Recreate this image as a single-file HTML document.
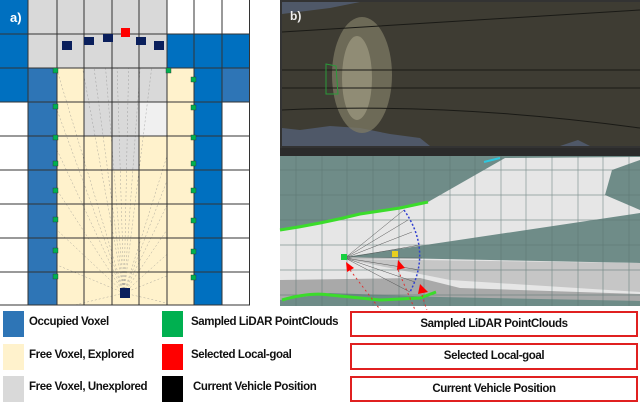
<!DOCTYPE html>
<html><head><meta charset="utf-8"><style>
body{margin:0;width:640px;height:403px;background:#fff;position:relative;overflow:hidden;font-family:"Liberation Sans",Arial,sans-serif}
.lg{position:absolute;font-size:11.5px;font-weight:bold;color:#111;letter-spacing:-0.4px;white-space:nowrap}
.sq{position:absolute;width:21px;height:26px}
.bx{position:absolute;left:350px;width:284px;border:2px solid #e02020;font-size:11.5px;font-weight:bold;text-align:center;color:#111;letter-spacing:-0.4px}
</style></head><body>
<svg width="640" height="310" style="position:absolute;left:0;top:0">
<defs><clipPath id="c1"><rect x="57" y="68" width="110" height="237"/></clipPath></defs>
<g>
<rect x="0" y="0" width="28" height="102" fill="#0070c0"/>
<rect x="28" y="0" width="139" height="68" fill="#d9d9d9"/>
<rect x="167" y="0" width="83" height="34" fill="#fff"/>
<rect x="167" y="34" width="83" height="34" fill="#0070c0"/>
<rect x="28" y="68" width="29" height="237" fill="#2e75b6"/>
<rect x="57" y="68" width="137" height="237" fill="#fff2cc"/>
<rect x="84" y="68" width="83" height="68" fill="#d9d9d9"/>
<rect x="139" y="102" width="28" height="34" fill="#f0f0f0"/>
<rect x="112" y="136" width="27" height="34" fill="#d9d9d9"/>
<rect x="194" y="68" width="28" height="237" fill="#0070c0"/>
<rect x="222" y="68" width="28" height="34" fill="#2e75b6"/>
</g>
<g stroke="#888" stroke-width="0.5" stroke-dasharray="2,2" opacity="0.7" clip-path="url(#c1)">
<line x1="124" y1="293" x2="57" y2="70"/><line x1="124" y1="293" x2="57" y2="110"/><line x1="124" y1="293" x2="57" y2="150"/><line x1="124" y1="293" x2="57" y2="190"/><line x1="124" y1="293" x2="57" y2="230"/><line x1="124" y1="293" x2="57" y2="265"/>
<line x1="124" y1="293" x2="70" y2="0"/><line x1="124" y1="293" x2="85" y2="0"/><line x1="124" y1="293" x2="100" y2="0"/><line x1="124" y1="293" x2="115" y2="0"/><line x1="124" y1="293" x2="130" y2="0"/><line x1="124" y1="293" x2="145" y2="0"/><line x1="124" y1="293" x2="160" y2="0"/>
<line x1="124" y1="293" x2="194" y2="70"/><line x1="124" y1="293" x2="194" y2="110"/><line x1="124" y1="293" x2="194" y2="150"/><line x1="124" y1="293" x2="194" y2="190"/><line x1="124" y1="293" x2="194" y2="230"/><line x1="124" y1="293" x2="194" y2="265"/>
<line x1="124" y1="293" x2="75" y2="305"/><line x1="124" y1="293" x2="175" y2="305"/>
</g>
<g stroke="#333" stroke-width="1" fill="none">
<path d="M0 34H250M0 68H250M0 102H250M0 136H250M0 170H250M0 204H250M0 238H250M0 272H250M0 305H250"/>
<path d="M28 0V305M57 0V305M84 0V305M112 0V305M139 0V305M167 0V305M194 0V305M222 0V305M249.5 0V305"/>
</g>
<text x="10" y="22" font-size="13" font-weight="bold" fill="#fff" font-family="Liberation Sans,sans-serif">a)</text>
<g fill="#00b050" stroke="#333" stroke-width="0.4">
<rect x="53" y="68" width="5" height="5"/><rect x="53" y="104" width="5" height="5"/><rect x="53" y="135" width="5" height="5"/><rect x="53" y="161" width="5" height="5"/><rect x="53" y="188" width="5" height="5"/><rect x="53" y="217" width="5" height="5"/><rect x="53" y="248" width="5" height="5"/><rect x="53" y="274" width="5" height="5"/>
<rect x="166" y="68" width="5" height="5"/><rect x="191" y="77" width="5" height="5"/><rect x="191" y="105" width="5" height="5"/><rect x="191" y="135" width="5" height="5"/><rect x="191" y="161" width="5" height="5"/><rect x="191" y="188" width="5" height="5"/><rect x="191" y="218" width="5" height="5"/><rect x="191" y="249" width="5" height="5"/><rect x="191" y="275" width="5" height="5"/>
</g>
<g fill="#0a1f5c">
<rect x="62" y="41" width="10" height="9"/><rect x="84" y="37" width="10" height="8"/><rect x="103" y="34" width="10" height="8"/><rect x="136" y="37" width="10" height="8"/><rect x="154" y="41" width="10" height="9"/>
<rect x="120" y="288" width="10" height="10"/>
</g>
<rect x="121" y="28" width="9" height="9" fill="#f00"/>
<!-- b top panel -->
<rect x="280" y="0" width="360" height="148" fill="#333"/>
<rect x="282" y="2" width="358" height="144" fill="#4f5868"/>
<path d="M282 14 L330 8 L360 2 L640 2 V146 H590 L578 140 L560 146 H430 L420 138 L390 134 L360 128 L330 126 L300 130 L282 128Z" fill="#3e3c33"/>
<ellipse cx="362" cy="75" rx="30" ry="58" fill="#7e7a64" opacity="0.75"/>
<ellipse cx="357" cy="78" rx="15" ry="42" fill="#a8a388" opacity="0.6"/>
<path d="M282 32 Q450 22 640 10M282 110 Q450 102 640 128M282 70 H640M282 88 H640" stroke="#1a1a16" stroke-width="1" fill="none"/>
<path d="M326 64 L336 66 L338 94 L326 94Z" stroke="#2a9a3a" fill="none" stroke-width="1"/>
<text x="290" y="20" font-size="12" font-weight="bold" fill="#eee" font-family="Liberation Sans,sans-serif">b)</text>
<rect x="280" y="148" width="360" height="8" fill="#2b2b2b"/>
<!-- bottom panel -->
<rect x="280" y="156" width="360" height="150" fill="#6f8c88"/>
<path d="M280 230 L330 222 L380 210 L428 202 L505 158 L640 157 L640 160 L612 170 L605 195 L640 210 L640 306 L280 306Z" fill="#e6e6e6"/>
<path d="M345 257 L640 213 L640 263 Z" fill="#6f8c88"/>
<path d="M345 259 L640 263 L640 292 L450 280 Z" fill="#c6c6c6"/>
<path d="M280 280 L420 278 L460 288 L640 294 L640 306 L280 306Z" fill="#a9a9a9"/>
<path d="M280 300 L330 293 L440 297 L640 301 L640 306 L280 306Z" fill="#6f8c88"/>
<g stroke="#5b7572" stroke-width="0.7" opacity="0.7">
<path d="M296 156V306M322 156V306M347 156V306M373 156V306M399 156V306M424 156V306M450 156V306M475 156V306M501 156V306M526 156V306M552 156V306M578 156V306M603 156V306M629 156V306"/>
<path d="M280 170H640M280 195H640M280 220H640M280 245H640M280 270H640M280 295H640"/>
</g>
<path d="M280 230 Q320 224 360 214 L400 208 L428 202" stroke="#3bdc2b" stroke-width="3" fill="none"/>
<path d="M282 300 Q310 292 330 295 L380 300 L420 298 L436 292" stroke="#3bdc2b" stroke-width="3" fill="none"/>
<path d="M484 162 L500 158" stroke="#2ec8e0" stroke-width="2"/>
<g stroke="#555" stroke-width="0.5">
<path d="M345 258L404 210M345 258L408 220M345 258L412 232M345 258L420 245M345 258L422 258M345 258L420 270M345 258L415 282M345 258L410 292"/>
</g>
<path d="M404 210 Q432 250 410 292" stroke="#3040d0" stroke-width="1.5" stroke-dasharray="2,2" fill="none"/>
<rect x="341" y="254" width="6" height="6" fill="#16d040"/>
<rect x="392" y="251" width="6" height="6" fill="#e8d020"/>
<g fill="#f00"><path d="M346 262 L354 268 L347 272Z"/><path d="M398 260 L405 268 L397 270Z"/><path d="M420 284 L428 292 L418 294Z"/></g>
<g stroke="#e03030" stroke-width="1" stroke-dasharray="2,3" fill="none">
<path d="M350 270 L430 375"/><path d="M398 270 L430 345"/><path d="M422 295 L430 320"/>
</g>
</svg>
<div class="sq" style="left:3px;top:311px;background:#2e75b6"></div>
<div class="sq" style="left:3px;top:344px;background:#fff2cc"></div>
<div class="sq" style="left:3px;top:376px;background:#d9d9d9"></div>
<div class="sq" style="left:162px;top:311px;background:#00b050"></div>
<div class="sq" style="left:162px;top:344px;background:#f00"></div>
<div class="sq" style="left:162px;top:376px;background:#000"></div>
<div class="lg" style="left:29px;top:316px">Occupied Voxel</div>
<div class="lg" style="left:29px;top:349px">Free Voxel, Explored</div>
<div class="lg" style="left:29px;top:381px">Free Voxel, Unexplored</div>
<div class="lg" style="left:191px;top:316px">Sampled LiDAR PointClouds</div>
<div class="lg" style="left:191px;top:349px">Selected Local-goal</div>
<div class="lg" style="left:193px;top:381px">Current Vehicle Position</div>
<div class="bx" style="top:311px;height:22px;line-height:22px">Sampled LiDAR PointClouds</div>
<div class="bx" style="top:343px;height:23px;line-height:23px">Selected Local-goal</div>
<div class="bx" style="top:376px;height:22px;line-height:22px">Current Vehicle Position</div>
</body></html>
